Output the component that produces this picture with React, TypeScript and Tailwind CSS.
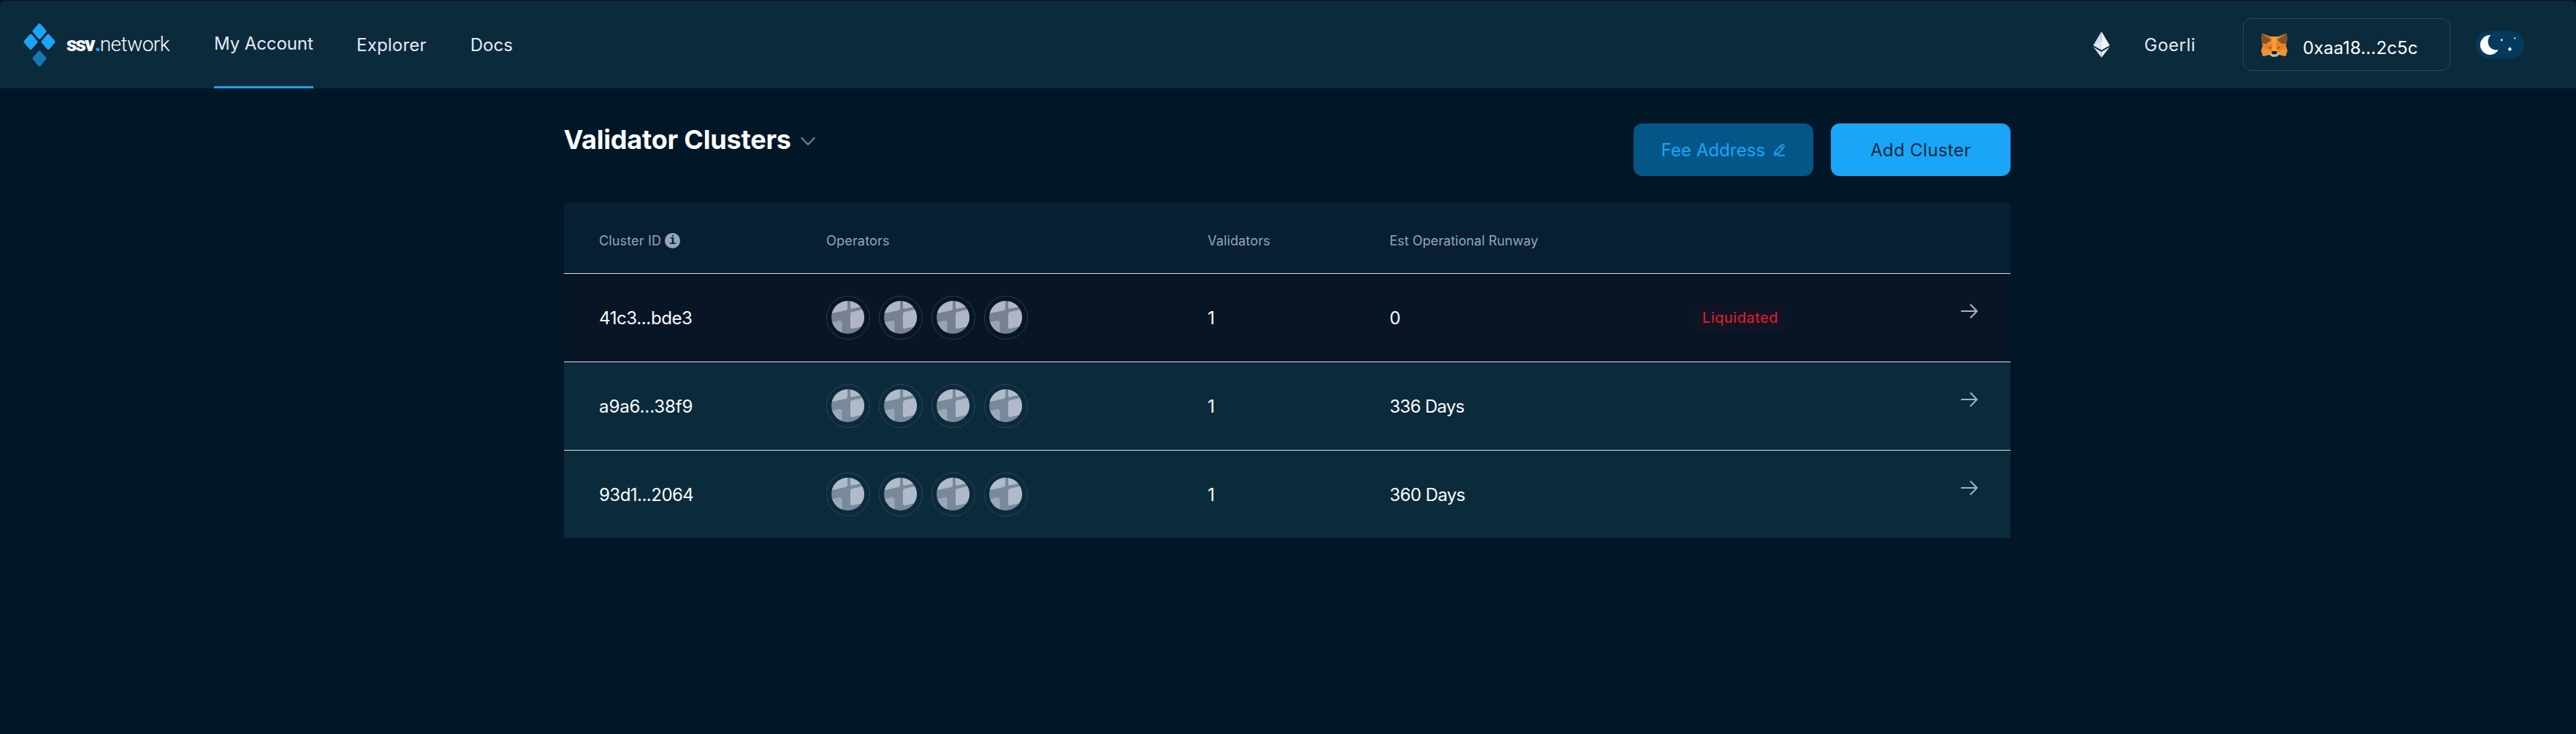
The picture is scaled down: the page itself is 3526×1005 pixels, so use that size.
import React from "react";

function Logo() {
  return (
    <div className="flex items-center">
      <svg className="mt-[1px] h-[61px] w-[44px]" viewBox="0 0 44 61" strokeWidth="4" strokeLinejoin="round">
        <path d="M22 3 L29.5 11.8 L22 20.6 L14.500 11.8Z" fill="#1ba5f8" stroke="#1ba5f8" />
        <path d="M10 17.500 L17.500 26.300 L10 35 L2.500 26.300Z" fill="#1ba5f8" stroke="#1ba5f8" />
        <path d="M34 17.500 L41.500 26.300 L34 35 L26.500 26.300Z" fill="#1ba5f8" stroke="#1ba5f8" />
        <path d="M22 40.300 L29.500 49.100 L22 57.900 L14.500 49.100Z" fill="#1577b3" stroke="#1577b3" />
      </svg>
      <div className="ml-[15px] flex w-[141px] font-['Roboto',sans-serif] text-[28px] leading-[32px] whitespace-nowrap text-white">
        <span className="w-[39px] font-black tracking-[-1.9px]">ssv</span>
        <span className="w-[7px] font-black text-[#1ba5f8]">.</span>
        <span className="font-light tracking-[-0.5px]">network</span>
      </div>
    </div>
  );
}

function EthIcon() {
  return (
    <svg className="h-[36px] w-[23px]" viewBox="0 0 23 36">
      <path d="M11.500 0 L0.300 19 L11.500 25.500Z" fill="#d5dbee" />
      <path d="M11.500 0 L22.700 19 L11.500 25.500Z" fill="#eef1fb" />
      <path d="M11.500 13.800 L0.300 19 L11.500 25.500Z" fill="#dfe4f4" />
      <path d="M11.500 13.800 L22.700 19 L11.500 25.500Z" fill="#f4f6fd" />
      <path d="M0.300 21.300 L11.500 28 V36Z" fill="#d5dbee" />
      <path d="M22.700 21.300 L11.500 28 V36Z" fill="#e6eaf7" />
    </svg>
  );
}

function FoxIcon() {
  return (
    <svg className="h-[33px] w-[36px]" viewBox="0 0 36 33">
      <path d="M1 1 L12.500 5 H23.500 L35 1 L35.500 10 L34 18 L36 24 L33.500 32 L25 30 L21 32.500 H15 L11 30 L2.500 32 L0 24 L2 18 L0.500 10Z" fill="#ec8b2e" />
      <path d="M12.500 5 H23.500 L20.500 14 L21.500 25 H14.500 L15.500 14Z" fill="#fb9d33" />
      <path d="M2 18 L13.500 15 L15.500 14 L14.500 24 L9 23Z M34 18 L22.500 15 L20.500 14 L21.500 24 L27 23Z" fill="#e8801f" />
      <path d="M0 24 L9 23 L11 30 L2.500 32Z M36 24 L27 23 L25 30 L33.500 32Z" fill="#f0923a" />
      <path d="M1 0.500 L14.500 9.500 L7.500 15 L1.500 15 L0.500 8Z" fill="#83512b" />
      <path d="M35 0.500 L21.500 9.500 L28.500 15 L34.500 15 L35.500 8Z" fill="#83512b" />
      <path d="M1 0.500 L12.500 5 L14.500 9.500Z M35 0.500 L23.500 5 L21.500 9.500Z" fill="#dd7c2a" />
      <path d="M10 19.500 L13.800 20.300 L13.300 22Z M26 19.500 L22.200 20.300 L22.700 22Z" fill="#2b3038" />
      <path d="M10.500 28 L14 26 H22 L25.500 28 L21 32.500 H15Z" fill="#c9beb4" />
      <path d="M14.800 25 H21.200 L22 28.300 L20.500 29.200 H15.500 L14 28.300Z" fill="#20242b" />
    </svg>
  );
}

function ThemeToggle() {
  return (
    <svg className="h-[38px] w-[66px]" viewBox="0 0 66 38">
      <rect width="66" height="38" rx="19" fill="#033a5d" />
      <path d="M19.500 6.500 A13 13 0 1 0 30 26.800 A12 12 0 0 1 19.500 6.500Z" fill="#fff" stroke="#fff" strokeLinejoin="round" />
      <path d="M35.300 10.700 L36.800 12.700 L35.300 14.700 L33.800 12.700Z" fill="#fff" />
      <circle cx="53.300" cy="10.400" r="1.100" fill="#fff" />
      <path d="M46.400 22.300 L49 25.300 L46.400 28.300 L43.800 25.300Z" fill="#fff" />
    </svg>
  );
}

function Avatar({ dim }: { dim: boolean }) {
  const base = dim ? "#77818f" : "#788a99";
  const light = dim ? "#b0b6c5" : "#b0bacb";
  const mid = dim ? "#9aa3b1" : "#9ba7b8";
  return (
    <div className={`size-[60px] rounded-full border pl-[6px] pt-[6px] ${dim ? "border-[#2a3a4c]" : "border-[#2e4259]"}`}>
      <svg className="size-[45px] overflow-hidden rounded-full" viewBox="0 0 45 45">
        <rect width="45" height="45" fill={base} />
        <path d="M0 17.200 L19.500 13 Q22 12.400 22 10 V0 H0Z" fill={light} />
        <path d="M26 0 V9 Q26 11 28 10.700 L45 7 V0Z" fill={light} />
        <path d="M45 11.300 L28.500 15 Q26 15.600 26 18 V36 Q26 38.500 28.500 38 L45 34.500Z" fill={light} />
        <path d="M0 29.500 L11 27 Q14.500 26.500 14.500 30 V45 H0Z" fill={mid} />
      </svg>
    </div>
  );
}

const GRID = "grid grid-cols-[311px_522px_249px_419px_1fr] pl-[48px]";

const clusters = [
  { id: "41c3...bde3", idTrack: "tracking-[-0.38px]", runway: "0", runTrack: "", liquidated: true },
  { id: "a9a6...38f9", idTrack: "tracking-[-0.1px]", runway: "336 Days", runTrack: "tracking-[-0.7px]", liquidated: false },
  { id: "93d1...2064", idTrack: "tracking-[-0.52px]", runway: "360 Days", runTrack: "tracking-[-0.6px]", liquidated: false },
];

function Cluster({ c }: { c: (typeof clusters)[number] }) {
  return (
    <div className={`${GRID} h-[121px] items-center border-t border-[#e0e0e0] text-[24px] text-[#fdfefe] ${c.liquidated ? "bg-[#081525]" : "bg-[#0b2a3c]"}`}>
      <span className={`pt-[2px] ${c.idTrack}`}>{c.id}</span>
      <div className="flex gap-[12px]">
        {[0, 1, 2, 3].map((i) => (
          <Avatar key={i} dim={c.liquidated} />
        ))}
      </div>
      <span className="pt-[2px]">1</span>
      <span className={`pt-[2px] ${c.runTrack}`}>{c.runway}</span>
      <div className="flex items-center">
        <div className="w-[363px]">
          {c.liquidated && (
            <span className="flex h-[39px] w-[122px] items-center justify-center rounded-[6px] bg-[#101526] text-[20px] tracking-[0.5px] text-[#ec1c26]">
              Liquidated
            </span>
          )}
        </div>
        <svg className="-mt-[19px] h-[20px] w-[23px]" viewBox="0 0 23 20" fill="none" stroke="#a5b2c6" strokeWidth="2" strokeLinecap="round" strokeLinejoin="round">
          <path d="M1 10 H21.500 M13.500 1.200 L22 10 L13.500 18.800" />
        </svg>
      </div>
    </div>
  );
}

export default function App() {
  return (
    <div className="min-h-[1005px] bg-[#1a0b24] pt-[1px] font-['Inter',sans-serif]">
      <div className="min-h-[1004px] rounded-t-[6px] bg-[#011627]">
        <header className="flex h-[120px] items-center justify-between rounded-t-[6px] bg-[#0b2a3c] pl-[32px] text-[24px] text-[#e6eaf7]">
          <div className="flex h-full items-center">
            <Logo />
            <nav className="ml-[61px] flex h-full">
              <div className="flex w-[136px] items-center border-b-[3px] border-[#1ba5f8] tracking-[-0.1px] whitespace-nowrap">My Account</div>
              <div className="ml-[59px] flex items-center pt-[1px] tracking-[0.2px]">Explorer</div>
              <div className="ml-[60px] flex items-center pt-[1px]">Docs</div>
            </nav>
          </div>
          <div className="flex items-center pr-[71px]">
            <EthIcon />
            <span className="ml-[47px] w-[135px] pt-[1px] tracking-[0.5px]">Goerli</span>
            <div className="flex h-[72px] w-[284px] items-center rounded-[12px] border border-[#34455a] pl-[24px]">
              <FoxIcon />
              <span className="ml-[21px] mt-[9px] tracking-[0.15px] text-white">0xaa18...2c5c</span>
            </div>
            <div className="ml-[35px]">
              <ThemeToggle />
            </div>
          </div>
        </header>
        <main className="ml-[772px] w-[1980px] pt-[48px]">
          <div className="flex h-[72px] justify-between">
            <div className="flex h-[44px] items-center">
              <h1 className="-ml-[0.5px] text-[36px] font-bold tracking-[-0.2px] text-white">Validator Clusters</h1>
              <svg className="ml-[13px] mt-[4px] h-[13px] w-[20px]" viewBox="0 0 20 13" fill="none" stroke="#66788d" strokeWidth="2.500" strokeLinecap="round" strokeLinejoin="round">
                <path d="M1.500 2 L10 10.800 L18.500 2" />
              </svg>
            </div>
            <div className="flex gap-[24px] text-[24px]">
              <button className="flex h-[72px] w-[246px] items-center justify-center rounded-[12px] bg-[#045688] text-[#1ba5f8]">
                <span className="pt-[1px] tracking-[0.05px]">Fee Address</span>
                <svg className="ml-[11px] h-[17px] w-[17px]" viewBox="0 0 17 17" fill="none" stroke="#1ba5f8" strokeWidth="1.600" strokeLinecap="round" strokeLinejoin="round">
                  <path d="M1.500 15.700 L2.600 11 L10.700 2 C11.800 0.800 13.400 1 14.200 1.900 C15.100 2.800 15.100 4.300 14.200 5.300 L6.500 13.900Z M3 11.500 L6 14 M9.500 3.600 L12.800 6.800 M7 15.900 H15.700" />
                </svg>
              </button>
              <button className="flex h-[72px] w-[246px] items-center justify-center rounded-[12px] bg-[#1ba5f8] pt-[1px] tracking-[0.38px] text-[#0b2a3c]">
                Add Cluster
              </button>
            </div>
          </div>
          <section className="mt-[36px]">
            <div className={`${GRID} h-[97px] items-center bg-[#071f32] pt-[8px] text-[18px] text-[#97a5ba]`}>
              <div className="flex items-center">
                <span className="tracking-[0.15px]">Cluster ID</span>
                <span className="ml-[5px] flex size-[21px] items-center justify-center rounded-full bg-[#97a5ba] font-['Liberation_Mono',monospace] text-[17px] leading-[21px] font-bold text-[#071f32]">
                  i
                </span>
              </div>
              <span className="tracking-[0.2px]">Operators</span>
              <span className="tracking-[0.15px]">Validators</span>
              <span className="tracking-[0.05px]">Est Operational Runway</span>
            </div>
            {clusters.map((c) => (
              <Cluster key={c.id} c={c} />
            ))}
          </section>
        </main>
      </div>
    </div>
  );
}
